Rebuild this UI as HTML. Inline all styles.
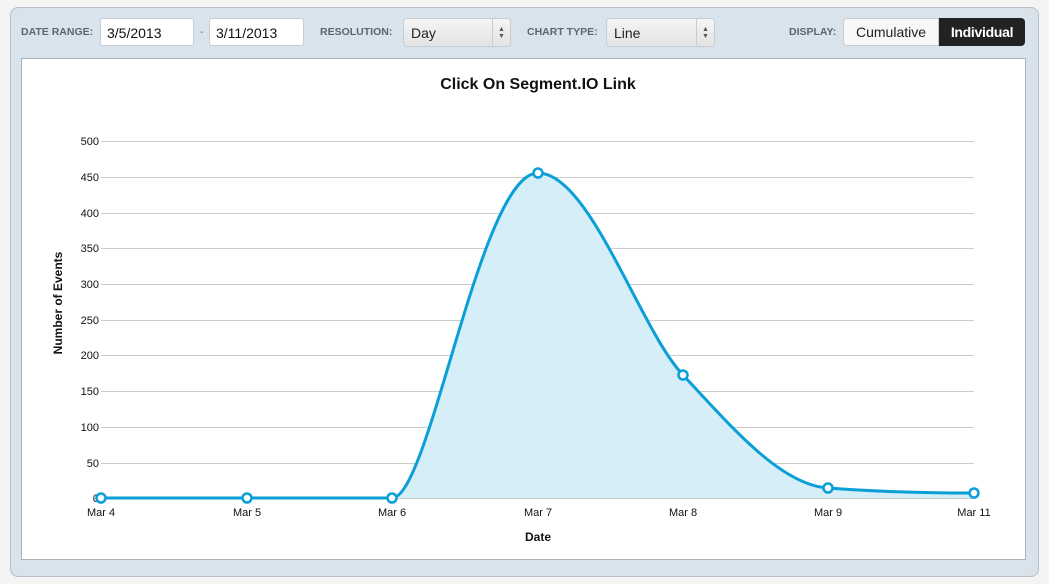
<!DOCTYPE html>
<html><head><style>
body{margin:0;background:#f4f4f4;font-family:"Liberation Sans",sans-serif;width:1049px;height:584px;overflow:hidden;position:relative}
.panel{position:absolute;left:10px;top:7px;width:1027px;height:568px;background:#d8e3ec;border:1px solid #b4bfc9;border-radius:8px}
.lbl{position:absolute;top:26px;font-size:10.5px;font-weight:bold;color:#5d6670}
.inp{position:absolute;top:18px;height:28px;background:#fff;border:1px solid #c7cdd3;border-radius:3px;font-size:14px;line-height:28px;padding-left:6px;box-sizing:border-box;color:#111}
.sel{position:absolute;top:18px;height:29px;background:linear-gradient(#f5f5f5,#e3e3e3);border:1px solid #c7cdd3;border-radius:4px;font-size:14px;line-height:29px;padding-left:7px;box-sizing:border-box;color:#222}
.sel .ar{position:absolute;right:0;top:0;width:18px;height:27px;border-left:1px solid #ccc;font-size:7px;line-height:7px;text-align:center;color:#555;padding-top:7px;box-sizing:border-box}
.chart{position:absolute;left:21px;top:58px;width:1003px;height:500px;background:#fff;border:1px solid #aab3bc}
</style></head><body>
<div class="panel"></div>
<div class="lbl" style="left:21px">DATE RANGE:</div>
<div class="inp" style="left:100px;width:94px">3/5/2013</div>
<div class="lbl" style="left:200px;font-weight:normal">-</div>
<div class="inp" style="left:209px;width:95px">3/11/2013</div>
<div class="lbl" style="left:320px">RESOLUTION:</div>
<div class="sel" style="left:403px;width:108px">Day<div class="ar">▲<br>▼</div></div>
<div class="lbl" style="left:527px">CHART TYPE:</div>
<div class="sel" style="left:606px;width:109px">Line<div class="ar">▲<br>▼</div></div>
<div class="lbl" style="left:789px">DISPLAY:</div>
<div style="position:absolute;left:843px;top:18px;width:96px;height:28px;background:#f7f7f7;border:1px solid #c7cdd3;border-radius:4px 0 0 4px;box-sizing:border-box;font-size:14px;line-height:27px;text-align:center;color:#222">Cumulative</div>
<div style="position:absolute;left:939px;top:18px;width:86px;height:28px;background:#222;border-radius:0 4px 4px 0;font-size:14px;line-height:28px;text-align:center;color:#fff;font-weight:bold;letter-spacing:-0.3px">Individual</div>
<div class="chart"></div>
<svg style="position:absolute;left:0;top:0" width="1049" height="584" font-family="Liberation Sans, sans-serif">
<text x="538" y="89" text-anchor="middle" font-size="16" font-weight="bold" fill="#111">Click On Segment.IO Link</text>
<g stroke="#ccc" stroke-width="1">
<line x1="101" x2="974" y1="141.5" y2="141.5"/><line x1="101" x2="974" y1="177.5" y2="177.5"/><line x1="101" x2="974" y1="213.5" y2="213.5"/><line x1="101" x2="974" y1="248.5" y2="248.5"/><line x1="101" x2="974" y1="284.5" y2="284.5"/><line x1="101" x2="974" y1="320.5" y2="320.5"/><line x1="101" x2="974" y1="355.5" y2="355.5"/><line x1="101" x2="974" y1="391.5" y2="391.5"/><line x1="101" x2="974" y1="427.5" y2="427.5"/><line x1="101" x2="974" y1="463.5" y2="463.5"/><line x1="101" x2="974" y1="498.5" y2="498.5"/>
</g>
<g font-size="11" fill="#111" text-anchor="end">
<text x="99" y="145">500</text><text x="99" y="181">450</text><text x="99" y="217">400</text><text x="99" y="252">350</text><text x="99" y="288">300</text><text x="99" y="324">250</text><text x="99" y="359">200</text><text x="99" y="395">150</text><text x="99" y="431">100</text><text x="99" y="467">50</text><text x="99" y="502">0</text>
</g>
<g font-size="11" fill="#111" text-anchor="middle">
<text x="101" y="516">Mar 4</text><text x="247" y="516">Mar 5</text><text x="392" y="516">Mar 6</text><text x="538" y="516">Mar 7</text><text x="683" y="516">Mar 8</text><text x="828" y="516">Mar 9</text><text x="974" y="516">Mar 11</text>
</g>
<text x="538" y="541" text-anchor="middle" font-size="12" font-weight="bold" fill="#111">Date</text>
<text transform="translate(62,303) rotate(-90)" text-anchor="middle" font-size="12" font-weight="bold" fill="#111">Number of Events</text>
<path d="M101,498 L392,498 C430,498 480,173 538,173 C590,173 640,330 683,375 C730,425 780,485 828,488 C880,492 930,493 974,493 L974,498 Z" fill="#d5eef7"/>
<path d="M101,498 L392,498 C430,498 480,173 538,173 C590,173 640,330 683,375 C730,425 780,485 828,488 C880,492 930,493 974,493" fill="none" stroke="#0b9fd8" stroke-width="3"/>
<g fill="#fff" stroke="#0b9fd8" stroke-width="2.5">
<circle cx="101" cy="498" r="4.5"/><circle cx="247" cy="498" r="4.5"/><circle cx="392" cy="498" r="4.5"/><circle cx="538" cy="173" r="4.5"/><circle cx="683" cy="375" r="4.5"/><circle cx="828" cy="488" r="4.5"/><circle cx="974" cy="493" r="4.5"/>
</g>
</svg>
</body></html>
